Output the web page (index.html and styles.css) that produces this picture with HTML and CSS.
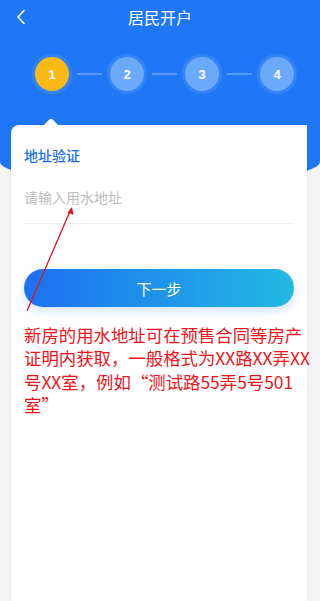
FILE: index.html
```html
<!DOCTYPE html>
<html lang="zh-CN">
<head>
  <meta charset="UTF-8">
  <meta name="viewport" content="width=device-width, initial-scale=1.0">
  <title>居民开户</title>
  <link rel="stylesheet" href="styles.css">
</head>
<body>
  <div class="page">
    <!-- 顶部蓝色区域 -->
    <div class="header">
      <div class="nav-bar">
        <svg class="back-icon" width="10" height="16" viewBox="0 0 10 16">
          <polyline points="8,1.5 2,8 8,14.5" fill="none" stroke="#fff" stroke-width="1.6" stroke-linecap="round" stroke-linejoin="round"/>
        </svg>
        <div class="nav-title">居民开户</div>
      </div>
      <div class="steps">
        <div class="step active"><span>1</span></div>
        <div class="step-line"></div>
        <div class="step"><span>2</span></div>
        <div class="step-line"></div>
        <div class="step"><span>3</span></div>
        <div class="step-line"></div>
        <div class="step"><span>4</span></div>
      </div>
    </div>

    <!-- 表单卡片 -->
    <div class="card">
      <div class="field-label">地址验证</div>
      <div class="field-input">请输入用水地址</div>
      <button class="next-button">下一步</button>
      <div class="note">新房的用水地址可在预售合同等房产<br>证明内获取，一般格式为XX路XX弄XX<br>号XX室，例如“测试路55弄5号501<br>室”</div>
    </div>

    <!-- 标注箭头 -->
    <svg class="note-arrow" width="60" height="110" viewBox="0 0 60 110">
      <line x1="5" y1="106" x2="49" y2="4" stroke="#e0141c" stroke-width="1.3"/>
      <polygon points="50,2 51.5,10 45.5,7.5" fill="#e0141c"/>
    </svg>
  </div>
</body>
</html>
```

FILE: styles.css
```css
/* 基本样式 */
body {
  margin: 0;
  background: #f4f4f4;
  font-family: "Noto Sans CJK SC", "Noto Sans", sans-serif;
}

.page {
  position: relative;
  display: flex;
  flex-direction: column;
  min-height: 601px;
}

/* 顶部区域 */
.header {
  height: 184px;
  background: #1f77f6;
  border-radius: 0 0 50% 50% / 0 0 22px 22px;
}

.nav-bar {
  display: flex;
  align-items: center;
  justify-content: center;
  position: relative;
  height: 34px;
}

.back-icon {
  position: absolute;
  left: 16px;
  top: 9px;
}

.nav-title {
  color: #fff;
  font-size: 16px;
  line-height: 20px;
}

/* 步骤条 */
.steps {
  display: flex;
  align-items: center;
  padding-left: 32px;
  margin-top: 20px;
}

.step {
  width: 40px;
  height: 40px;
  padding: 3px;
  box-sizing: border-box;
  border-radius: 50%;
  background: rgba(255, 255, 255, 0.1);
}

.step span {
  display: flex;
  align-items: center;
  justify-content: center;
  width: 34px;
  height: 34px;
  border-radius: 50%;
  background: #6ba9fb;
  color: #fff;
  font-size: 13px;
  font-weight: bold;
  font-family: "Liberation Sans", Arial, sans-serif;
}

.step.active span {
  background: #fab915;
}

.step-line {
  width: 25px;
  height: 2px;
  margin: 0 5px;
  background: rgba(255, 255, 255, 0.25);
}

/* 卡片 */
.card {
  position: relative;
  flex: 1;
  margin: -59px 13px 0 11px;
  padding: 20px 13px 0;
  background: #fff;
  border-radius: 8px 0 0 0;
  box-shadow: 0 0 6px rgba(0, 0, 0, 0.06);
}

.card::before {
  content: "";
  position: absolute;
  left: 35px;
  top: -5px;
  width: 10px;
  height: 10px;
  background: #fff;
  border-radius: 2px 0 0 0;
  transform: rotate(45deg);
}

.field-label {
  color: #1b6ee6;
  font-size: 14px;
  line-height: 20px;
  font-weight: 500;
}

.field-input {
  padding: 22px 0 16px;
  color: #bdbdbd;
  font-size: 14px;
  line-height: 20px;
  border-bottom: 1px solid #f0f0f0;
}

/* 按钮 */
.next-button {
  display: block;
  width: 100%;
  height: 38px;
  margin-top: 45px;
  border: none;
  border-radius: 19px;
  background: linear-gradient(90deg, #1d6ff2, #23b9e2);
  box-shadow: 0 4px 8px rgba(30, 120, 240, 0.2);
  color: #fff;
  font-size: 15px;
  font-family: inherit;
}

/* 标注说明 */
.note {
  margin-top: 16px;
  color: #f0141c;
  font-size: 17.4px;
  line-height: 23.4px;
  white-space: nowrap;
}

.note-arrow {
  position: absolute;
  left: 22px;
  top: 205px;
}
```
